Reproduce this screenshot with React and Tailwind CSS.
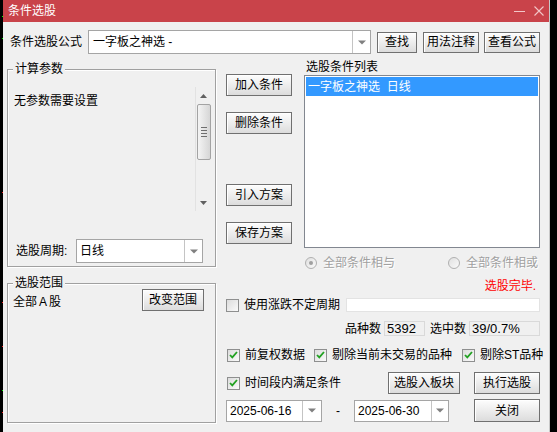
import React from 'react';

const FONT = "font-['Liberation_Sans','Noto_Sans_CJK_SC',sans-serif]";

function Btn({ w, h = 'h-[22px]', className = '', children }) {
  return (
    <button
      className={`${w} ${h} shrink-0 border border-[#707070] bg-linear-to-b from-[#fdfdfd] via-[#ededed] to-[#dcdcdc] shadow-[inset_1px_1px_0_#fff] text-[12px] leading-none text-black flex items-center justify-center ${className}`}
    >
      {children}
    </button>
  );
}

function Arrow() {
  return (
    <svg width="8" height="5" viewBox="0 0 8 5">
      <path d="M0 0.5h8L4 4.5z" fill="#808080" />
    </svg>
  );
}

function Combo({ w, h = 'h-[24px]', dw = 'w-[18px]', text, textClass = '' }) {
  return (
    <div className={`${w} ${h} shrink-0 flex border border-[#a5a5a5] bg-white`}>
      <div className={`flex-1 flex items-center pl-[3px] text-[12px] whitespace-pre ${textClass}`}>{text}</div>
      <div className={`${dw} border-l border-[#c4c4c4] flex items-center justify-center`}>
        <Arrow />
      </div>
    </div>
  );
}

function Check({ checked = true }) {
  return (
    <span className="w-[13px] h-[13px] shrink-0 border border-[#8e8f8f] bg-linear-to-br from-[#dcdcdc] to-[#fafafa] flex items-center justify-center">
      {checked && (
        <svg width="9" height="8" viewBox="0 0 9 8">
          <path d="M1 4l2.3 2.4L8 1" fill="none" stroke="#21a121" strokeWidth="1.8" />
        </svg>
      )}
    </span>
  );
}

function Radio({ dot }) {
  return (
    <span className="w-[12px] h-[12px] shrink-0 rounded-full border border-[#b0b0b0] bg-linear-to-br from-[#e0e0e0] to-[#fafafa] flex items-center justify-center">
      {dot && <span className="w-[4px] h-[4px] rounded-full bg-[#a0a0a0]" />}
    </span>
  );
}

function Group({ title, className = '', children }) {
  return (
    <div className={`relative border border-[#a0a0a0] shadow-[inset_1px_1px_0_#fff,1px_1px_0_#fff] ${className}`}>
      <span className="absolute left-[5px] -top-[8px] px-[2px] bg-[#f0f0f0] text-[12px] leading-[14px]">{title}</span>
      {children}
    </div>
  );
}

function Scrollbar() {
  return (
    <div className="w-[16px] h-[124px] shrink-0 bg-[#f0f0f0] border-l border-[#e2e2e2] flex flex-col items-center">
      <div className="h-[17px] flex items-center justify-center">
        <svg width="7" height="4" viewBox="0 0 7 4"><path d="M0 4h7L3.5 0z" fill="#606060" /></svg>
      </div>
      <div className="w-[14px] h-[56px] rounded-[2px] border border-[#a3a3a3] bg-linear-to-r from-[#f4f4f4] to-[#d6d6d6] flex flex-col items-center justify-center gap-[2px]">
        <span className="w-[6px] h-px bg-[#6e6e6e]" />
        <span className="w-[6px] h-px bg-[#6e6e6e]" />
        <span className="w-[6px] h-px bg-[#6e6e6e]" />
        <span className="w-[6px] h-px bg-[#6e6e6e]" />
      </div>
      <div className="flex-1" />
      <div className="h-[16px] flex items-center justify-center">
        <svg width="7" height="4" viewBox="0 0 7 4"><path d="M0 0h7L3.5 4z" fill="#606060" /></svg>
      </div>
    </div>
  );
}

export default function App() {
  return (
    <div className={`relative w-[557px] h-[432px] bg-black flex overflow-hidden text-black ${FONT}`}>
      {/* chart pixels behind the dialog */}
      <span className="absolute left-[2px] top-[16px] w-px h-px bg-[#00ff00]" />
      <span className="absolute left-[2px] top-[38px] w-px h-px bg-[#00ff00]" />
      <span className="absolute left-[2px] top-[192px] w-px h-px bg-[#ff2020]" />
      <span className="absolute left-[2px] top-[302px] w-px h-px bg-[#ff2020]" />
      <span className="absolute left-[2px] top-[346px] w-px h-px bg-[#ff2020]" />
      <span className="absolute left-[2px] top-[390px] w-px h-px bg-[#00ff00]" />
      <span className="absolute left-[2px] top-[412px] w-px h-px bg-[#ff2020]" />

      <div className="w-[3px] shrink-0" />
      <div className="w-[547px] shrink-0 bg-[#f0f0f0] border-r border-[#c8c8c8] flex flex-col">
        {/* title bar */}
        <div className="h-[22px] shrink-0 bg-[#c9434a] flex items-center">
          <span className="pl-[5px] text-[12px] leading-none text-white">条件选股</span>
          <div className="ml-auto flex items-center mr-[5px]">
            <span className="w-[11px] h-px bg-[#f2c6c8]" />
            <svg className="ml-[9px]" width="10" height="10" viewBox="0 0 10 10">
              <path d="M0.5 0.5l9 9M9.5 0.5l-9 9" stroke="#f2c6c8" strokeWidth="1.1" />
            </svg>
          </div>
        </div>

        <div className="pl-[4px] flex flex-col">
          {/* formula row */}
          <div className="mt-[8px] h-[24px] flex items-center">
            <span className="pl-[3px] w-[81px] text-[12px]">条件选股公式</span>
            <Combo w="w-[283px]" text="一字板之神选 -" textClass="pl-[4px]" />
            <Btn w="w-[40px]" h="h-[21px]" className="ml-[6px]">查找</Btn>
            <Btn w="w-[56px]" h="h-[21px]" className="ml-[6px]">用法注释</Btn>
            <Btn w="w-[56px]" h="h-[21px]" className="ml-[5px]">查看公式</Btn>
          </div>

          <div className="mt-[6px] flex">
            {/* left column */}
            <div className="w-[209px] shrink-0 flex flex-col">
              <Group title="计算参数" className="mt-[9px] h-[198px] flex flex-col">
                <div className="flex">
                  <div className="flex-1 pl-[6px] pt-[24px] text-[12px] leading-[14px]">无参数需要设置</div>
                  <div className="mt-[17px] mr-[4px]">
                    <Scrollbar />
                  </div>
                </div>
                <div className="mt-auto mb-[3px] h-[24px] flex items-center">
                  <span className="pl-[8px] w-[68px] text-[12px]">选股周期:</span>
                  <Combo w="w-[127px]" text="日线" />
                </div>
              </Group>
              <Group title="选股范围" className="mt-[16px] h-[140px]">
                <div className="flex justify-between pl-[5px] pr-[11px] pt-[5px]">
                  <span className="mt-[6px] text-[12px] leading-[14px]">全部<span className="px-[2px]">A</span>股</span>
                  <Btn w="w-[62px]">改变范围</Btn>
                </div>
              </Group>
            </div>

            {/* right area */}
            <div className="ml-[10px] w-[314px] shrink-0 flex flex-col text-[12px]">
              <div className="flex">
                <div className="w-[66px] flex flex-col pt-[14px]">
                  <Btn w="w-[66px]">加入条件</Btn>
                  <Btn w="w-[66px]" className="mt-[16px]">删除条件</Btn>
                  <Btn w="w-[66px]" className="mt-[50px]">引入方案</Btn>
                  <Btn w="w-[66px]" className="mt-[16px]">保存方案</Btn>
                </div>
                <div className="ml-[12px] w-[236px] flex flex-col">
                  <span className="pl-[2px] h-[14px] leading-[14px]">选股条件列表</span>
                  <div className="mt-[1px] h-[173px] border border-[#828790] bg-white p-[1px]">
                    <div className="h-[19px] bg-[#3399ff] text-white pl-[2px] flex items-center whitespace-pre">一字板之神选  日线</div>
                  </div>
                </div>
              </div>

              <div className="mt-[8px] h-[14px] pl-[79px] flex items-center text-[#a0a0a0] [text-shadow:1px_1px_0_#fff]">
                <div className="w-[143px] flex items-center">
                  <Radio dot />
                  <span className="ml-[6px]">全部条件相与</span>
                </div>
                <div className="flex items-center">
                  <Radio />
                  <span className="ml-[6px]">全部条件相或</span>
                </div>
              </div>

              <div className="mt-[9px] h-[14px] leading-[14px] text-right pr-[4px] text-[#ff0000]">选股完毕.</div>

              <div className="mt-[5px] h-[14px] flex items-center">
                <Check checked={false} />
                <span className="ml-[5px]">使用涨跌不定周期</span>
                <div className="ml-auto w-[194px] h-[14px] bg-white border border-[#e3e3e3]" />
              </div>

              <div className="mt-[9px] h-[15px] flex items-center justify-end">
                <span>品种数</span>
                <span className="ml-[3px] w-[41px] h-[15px] border border-[#d9d9d9] pl-[2px] flex items-center text-[13px]">5392</span>
                <span className="ml-[5px]">选中数</span>
                <span className="ml-[3px] w-[71px] h-[15px] border border-[#d9d9d9] pl-[2px] flex items-center text-[13px]">39/0.7%</span>
              </div>

              <div className="mt-[12px] h-[14px] flex items-center whitespace-nowrap">
                <span className="ml-[1px]"><Check /></span>
                <span className="ml-[5px]">前复权数据</span>
                <span className="ml-[9px]"><Check /></span>
                <span className="ml-[5px]">剔除当前未交易的品种</span>
                <span className="ml-[10px]"><Check /></span>
                <span className="ml-[5px]">剔除ST品种</span>
              </div>

              <div className="mt-[10px] h-[22px] flex items-center">
                <span className="ml-[1px]"><Check /></span>
                <span className="ml-[5px]">时间段内满足条件</span>
                <Btn w="w-[72px]" className="ml-auto">选股入板块</Btn>
                <Btn w="w-[66px]" className="ml-[14px]">执行选股</Btn>
              </div>

              <div className="mt-[5px] h-[23px] flex items-center">
                <Combo w="w-[96px]" h="h-[22px]" dw="w-[19px]" text="2025-06-16" />
                <span className="w-[32px] text-center">-</span>
                <Combo w="w-[95px]" h="h-[22px]" dw="w-[17px]" text="2025-06-30" />
                <Btn w="w-[66px]" h="h-[23px]" className="ml-auto">关闭</Btn>
              </div>
            </div>
          </div>
        </div>
      </div>
    </div>
  );
}
